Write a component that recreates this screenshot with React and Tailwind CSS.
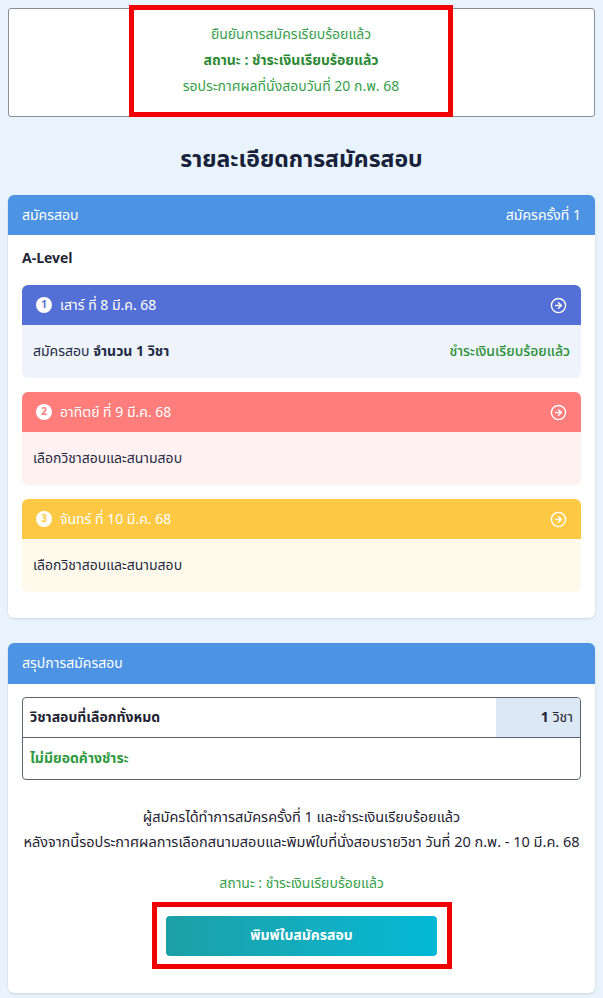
import { CircleArrowRight } from 'lucide-react';

const days = [
  {
    no: 1,
    label: 'เสาร์ ที่ 8 มี.ค. 68',
    head: 'bg-[#5470d6]',
    body: 'bg-[#eef3fc]',
    num: 'text-[#5470d6]',
    done: true,
  },
  {
    no: 2,
    label: 'อาทิตย์ ที่ 9 มี.ค. 68',
    head: 'bg-[#ff7d7b]',
    body: 'bg-[#fff1f1]',
    num: 'text-[#ff7d7b]',
  },
  {
    no: 3,
    label: 'จันทร์ ที่ 10 มี.ค. 68',
    head: 'bg-[#fdc945]',
    body: 'bg-[#fffaeb]',
    num: 'text-[#fdc945]',
  },
];

function DayCard({ day }) {
  return (
    <div className="rounded-md overflow-hidden">
      <div className={`${day.head} h-10 px-[14px] flex items-center justify-between text-white`}>
        <div className="flex items-center gap-2">
          <span className={`w-4 h-4 rounded-full bg-white ${day.num} text-[10px] font-bold flex items-center justify-center`}>
            {day.no}
          </span>
          <span className="text-[14px]">{day.label}</span>
        </div>
        <CircleArrowRight size={17} strokeWidth={2} />
      </div>
      <div className={`${day.body} h-[53px] px-[11px] flex items-center justify-between text-[14px] text-[#1f2a44]`}>
        {day.done ? (
          <>
            <span>
              สมัครสอบ <b className="font-bold">จำนวน 1 วิชา</b>
            </span>
            <span className="text-[#2a9138] font-medium">ชำระเงินเรียบร้อยแล้ว</span>
          </>
        ) : (
          <span>เลือกวิชาสอบและสนามสอบ</span>
        )}
      </div>
    </div>
  );
}

export default function App() {
  return (
    <div
      className="w-[603px] h-[998px] bg-[#e8f3fd] px-2 pt-2 overflow-hidden"
      style={{ fontFamily: '"Noto Sans Thai", "Noto Sans", "DejaVu Sans", sans-serif' }}
    >
      {/* confirmation box */}
      <div className="bg-white border border-[#8a8f96] rounded-[3px] h-[109px] flex justify-center pr-[21px]">
        <div className="-mt-[4px] w-[324px] h-[112px] border-[5px] border-[#f00000] flex flex-col items-center justify-center gap-[4px] text-[14px] text-[#36a04a] leading-[22px]">
          <div>ยืนยันการสมัครเรียบร้อยแล้ว</div>
          <div className="font-bold text-[#2b8a33]">สถานะ : ชำระเงินเรียบร้อยแล้ว</div>
          <div>รอประกาศผลที่นั่งสอบวันที่ 20 ก.พ. 68</div>
        </div>
      </div>

      <h1 className="text-center text-[23px] font-bold text-[#18213a] mt-[26px] mb-[18px] leading-[34px]">
        รายละเอียดการสมัครสอบ
      </h1>

      {/* registration card */}
      <div className="bg-white rounded-md shadow-sm overflow-hidden">
        <div className="bg-[#4d93e3] h-10 px-[14px] flex items-center justify-between text-white text-[14px]">
          <span>สมัครสอบ</span>
          <span>สมัครครั้งที่ 1</span>
        </div>
        <div className="px-[14px] pt-[8px] pb-[26px]">
          <div className="font-bold text-[14px] text-[#1f2433] h-[30px] flex items-center mb-[12px]">A-Level</div>
          <div className="flex flex-col gap-[14px]">
            {days.map((d) => (
              <DayCard key={d.no} day={d} />
            ))}
          </div>
        </div>
      </div>

      {/* summary card */}
      <div className="bg-white rounded-md shadow-sm overflow-hidden mt-[25px]">
        <div className="bg-[#4d93e3] h-[41px] px-[14px] flex items-center text-white text-[14px]">
          สรุปการสมัครสอบ
        </div>
        <div className="px-[14px] pt-[13px] pb-[24px]">
          <div className="border border-[#5b6470] rounded-[4px] overflow-hidden text-[14px]">
            <div className="flex h-10 border-b border-[#5b6470]">
              <div className="flex-1 px-[7px] flex items-center font-bold text-[#1f2433]">วิชาสอบที่เลือกทั้งหมด</div>
              <div className="w-[84px] bg-[#dde8f6] px-[7px] flex items-center justify-end text-[#1f2433]">
                <b className="font-bold mr-1">1</b>วิชา
              </div>
            </div>
            <div className="h-[41px] px-[7px] flex items-center text-[#2e9a3e] font-bold">ไม่มียอดค้างชำระ</div>
          </div>

          <div className="mt-[26px] text-center text-[14.5px] text-[#1f2433] leading-[25px]">
            <div>ผู้สมัครได้ทำการสมัครครั้งที่ 1 และชำระเงินเรียบร้อยแล้ว</div>
            <div>หลังจากนี้รอประกาศผลการเลือกสนามสอบและพิมพ์ใบที่นั่งสอบรายวิชา วันที่ 20 ก.พ. - 10 มี.ค. 68</div>
          </div>

          <div className="mt-[17px] text-center text-[14px] text-[#36a04a]">สถานะ : ชำระเงินเรียบร้อยแล้ว</div>

          <div className="flex justify-center mt-[8px]">
            <div className="w-[300px] h-[67px] border-[5px] border-[#f00000] flex items-center justify-center">
              <button className="w-[271px] h-10 rounded-[4px] bg-gradient-to-r from-[#1ba0a6] to-[#03b9d6] text-white font-bold text-[14px]">
                พิมพ์ใบสมัครสอบ
              </button>
            </div>
          </div>
        </div>
      </div>
    </div>
  );
}
